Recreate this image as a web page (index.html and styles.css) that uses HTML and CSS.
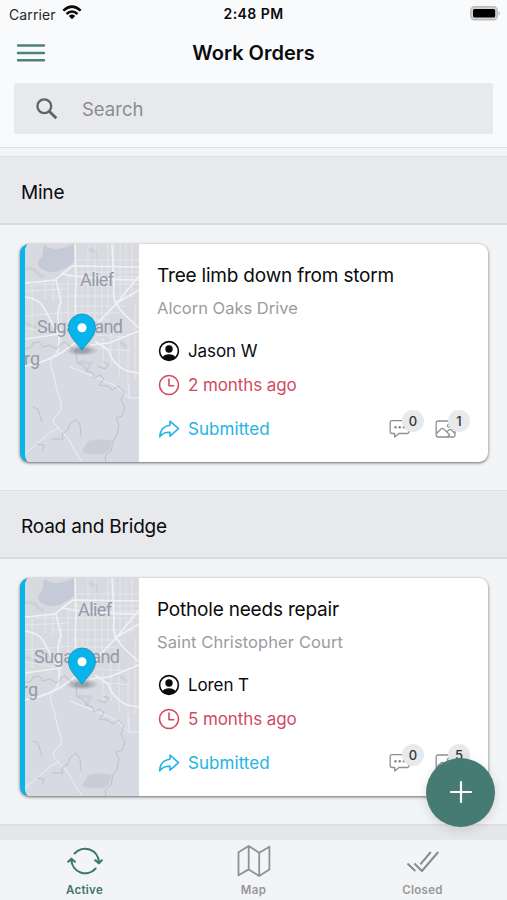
FILE: index.html
```html
<!DOCTYPE html>
<html lang="en">
<head>
<meta charset="utf-8">
<title>Work Orders</title>
<link rel="stylesheet" href="styles.css">
</head>
<body>
<svg class="defs" width="0" height="0" aria-hidden="true">
  <symbol id="map" viewBox="0 0 114 218">
    <rect width="114" height="218" fill="#d7dae2"/>
    <path d="M0 0H114V145L96 133 80 117 54 105 35 110 0 100Z" fill="#d8dae0"/>
    <path d="M19 1Q27 6 34 5T49 0V18Q43 23 34 27 22 30 14 23 11 19 17 13Z" fill="#c5cad7"/>
    <path d="M63 197Q74 194 87 197L83 208Q70 213 57 208Z" fill="#cacdd5"/>
    <path d="M0 25Q10 23 13 30L19 33M63 5L71 8 70 17M53 118L66 119 61 128M93 97L102 103M0 79L12 84" fill="none" stroke="#cbd0da" stroke-width="3"/>
    <g fill="none" stroke="#e9ebef" stroke-width=".8">
      <path d="M50 16H114M48 28H114M43 33H114M10 40H114M26 52H110M48 62H101M47 69H94M48 76H84M0 47L45 45M0 72L47 68M63 0V75M70 0V76M77 18V78M83 0V72M89 0V60M95 0V51M101 0V48M107 0V48M57 20V78M43 31V81M36 43V98M28 35V57M20 35V55M0 84L33 89M7 40V90M72 91L101 93M73 104L106 107M86 81V123M94 82V134M103 90V146M110 60V136M78 94V122"/>
    </g>
    <g fill="none" stroke="#f1f2f6" stroke-linejoin="round">
      <path d="M0 39L30 36Q38 29 48 22L114 23M0 53Q15 55 19 64L28 81Q35 89 34 98T32 109M31 36L36 58Q30 69 36 91M50 0L51 37Q50 57 51 80M87 0L89 44Q86 57 100 71L114 84M114 32L91 60 70 82 45 103Q25 118 0 122M70 97L83 106Q88 121 102 127L114 129M90 60L114 46M37 30Q72 36 114 36M0 95L35 90M65 101L84 99 114 87" stroke-width="1.6"/>
      <path d="M32 108Q24 116 26 123L30 136Q31 143 33 150 39 164 34 169 26 176 29 179L41 192Q46 198 48 204L57 218M45 123L73 134 91 142 104 154M0 210L26 188 34 184M104 140V154H114" stroke-width=".9"/>
    </g>
    <g fill="none" stroke="#b8bdc8" stroke-width=".9" stroke-linejoin="round">
      <path d="M0 104Q6 106 8 99L14 98 18 103 25 101 31 105 39 98 45 102 51 109 52 119 58 121 62 127 68 129 69 134 75 131 79 135 74 141 82 142 88 146 93 142 99 148 96 156 100 164 97 172 91 174 94 181 92 191 88 197 86 207 80 212 81 218"/>
      <path d="M27 195H38L37 190 43 186 45 180 51 175 55 181 56 193M8 163L13 165 17 178M12 200L19 201 17 207M72 122L80 125 84 120 78 118"/>
    </g>
  </symbol>
  <symbol id="pin" viewBox="0 0 34 44">
    <ellipse cx="17" cy="37.5" rx="15" ry="5" fill="#7f8490" opacity=".16"/>
    <ellipse cx="17" cy="37.5" rx="12" ry="4" fill="#7f8490" opacity=".24"/>
    <ellipse cx="17" cy="37.5" rx="8" ry="2.8" fill="#666b75" opacity=".3"/>
    <path d="M17 37.3C13 31 3.500 24 3.500 14.400a13.500 13.500 0 0 1 27 0C30.500 24 21 31 17 37.300Z" fill="#09b4ea" stroke="#1692bd" stroke-width=".8"/>
    <circle cx="17" cy="14.700" r="4.500" fill="#fff"/>
  </symbol>
  <symbol id="person" viewBox="0 0 22 22">
    <circle cx="11" cy="11" r="9.400" fill="none" stroke="#0b0b0c" stroke-width="1.600"/>
    <circle cx="11" cy="9" r="3.700" fill="#0b0b0c"/>
    <path d="M4.300 17.300Q6.500 14.300 11 14.300T17.700 17.300Q15 20.400 11 20.400T4.300 17.300Z" fill="#0b0b0c"/>
  </symbol>
  <symbol id="clock" viewBox="0 0 22 22">
    <g fill="none" stroke="#d04a60" stroke-width="1.600" stroke-linecap="round" stroke-linejoin="round"><circle cx="11" cy="11" r="9.500"/><path d="M11 5V11.700H15.700"/></g>
  </symbol>
  <symbol id="share" viewBox="0 0 22 22">
    <path d="M12 3.200L20.500 10.700 12 18.200V14.200C7.500 14 4 15.500 1.700 18.800 2 12.400 5 8 12 7.200Z" fill="none" stroke="#23b4e4" stroke-width="1.600" stroke-linejoin="round"/>
  </symbol>
  <symbol id="chat" viewBox="0 0 22 20">
    <path d="M3 1.700H18.200Q20 1.700 20 3.500V12.700Q20 14.500 18.200 14.500H10L5.700 18V14.500H3Q1.200 14.500 1.200 12.700V3.500Q1.200 1.700 3 1.700Z" fill="none" stroke="#8d8f92" stroke-width="1.300" stroke-linejoin="round"/>
    <g fill="#808286"><circle cx="6.500" cy="8.200" r="1.200"/><circle cx="10.700" cy="8.200" r="1.200"/><circle cx="14.900" cy="8.200" r="1.200"/></g>
  </symbol>
  <symbol id="photo" viewBox="0 0 22 20">
    <g fill="none" stroke="#8d8f92" stroke-width="1.300" stroke-linejoin="round"><rect x="1.200" y="2" width="18.800" height="16" rx="1.800"/><circle cx="14" cy="6.700" r="1.500"/><path d="M1.500 14.500L6.300 9.800Q7.500 9 8.600 9.900L14.600 15.800 12.500 18M11.500 12.700L14.300 10.700Q15.400 10 16.500 11L20 14.500"/></g>
  </symbol>
</svg>
<div class="screen">
  <header class="top">
    <div class="status">
      <div class="carrier"><span>Carrier</span>
        <svg width="20" height="15" viewBox="0 0 20 15"><g fill="none" stroke="#0b0b0c" stroke-width="2.500"><path d="M1.300 5.600Q10-2.400 18.700 5.600"/><path d="M4.500 9Q10 4 15.500 9"/></g><path d="M6.800 11Q10 8.200 13.200 11L10 14.300Z" fill="#0b0b0c"/></svg>
      </div>
      <div class="time">2:48 PM</div>
      <svg class="battery" width="31" height="15" viewBox="0 0 31 15"><rect x=".8" y=".8" width="26.500" height="13" rx="3.800" fill="#d5d5d6" stroke="#b9babb" stroke-width="1.400"/><rect x="3" y="3" width="22.200" height="8.600" rx="1.500" fill="#000"/><path d="M28.700 5Q31 7.200 28.700 9.600Z" fill="#acadae"/></svg>
    </div>
    <div class="titlebar">
      <svg class="menu" width="30" height="20" viewBox="0 0 30 20"><path d="M2 2.500H28M2 10H28M2 17.200H28" stroke="#4d827b" stroke-width="2.400" stroke-linecap="round"/></svg>
      <h1>Work Orders</h1>
    </div>
    <div class="search">
      <svg width="22" height="22" viewBox="0 0 22 22" fill="none" stroke="#626366"><circle cx="8.300" cy="8.300" r="6.900" stroke-width="2.300"/><path d="M13.200 13.200L20.300 20.300" stroke-width="2.900"/></svg>
      <span>Search</span>
    </div>
  </header>
  <main>
    <h2>Mine</h2>
    <div class="group">
      <article class="card">
        <div class="thumb">
          <svg width="114" height="218" viewBox="0 0 114 218"><use href="#map" width="114" height="218"/><g class="place"><text x="55" y="42" textLength="34">Alief</text><text x="12" y="89" textLength="86">Sugar Land</text><text x="-1" y="121">rg</text></g><use href="#pin" x="40" y="69" width="34" height="44"/></svg>
        </div>
        <div class="info">
          <h3>Tree limb down from storm</h3>
          <p class="address">Alcorn Oaks Drive</p>
          <div class="row"><svg width="22" height="22"><use href="#person"/></svg><span>Jason W</span></div>
          <div class="row age"><svg width="22" height="22"><use href="#clock"/></svg><span>2 months ago</span></div>
          <div class="row state"><svg width="22" height="22"><use href="#share"/></svg><span>Submitted</span>
            <div class="counts"><div class="count"><svg width="22" height="20"><use href="#chat"/></svg><b>0</b></div><div class="count"><svg width="22" height="20"><use href="#photo"/></svg><b>1</b></div></div>
          </div>
        </div>
      </article>
    </div>
    <h2>Road and Bridge</h2>
    <div class="group">
      <article class="card">
        <div class="thumb">
          <svg width="114" height="218" viewBox="0 0 114 218"><use href="#map" width="114" height="218"/><g class="place"><text x="53" y="38" textLength="34">Alief</text><text x="9" y="85" textLength="86">Sugar Land</text><text x="-3" y="118">rg</text></g><use href="#pin" x="40" y="69" width="34" height="44"/></svg>
        </div>
        <div class="info">
          <h3>Pothole needs repair</h3>
          <p class="address court">Saint Christopher Court</p>
          <div class="row"><svg width="22" height="22"><use href="#person"/></svg><span>Loren T</span></div>
          <div class="row age"><svg width="22" height="22"><use href="#clock"/></svg><span>5 months ago</span></div>
          <div class="row state"><svg width="22" height="22"><use href="#share"/></svg><span>Submitted</span>
            <div class="counts"><div class="count"><svg width="22" height="20"><use href="#chat"/></svg><b>0</b></div><div class="count"><svg width="22" height="20"><use href="#photo"/></svg><b>5</b></div></div>
          </div>
        </div>
      </article>
    </div>
    <div class="next"></div>
  </main>
  <button class="add" aria-label="Add"><svg width="24" height="24" viewBox="0 0 24 24"><path d="M12 2V22M2 12H22" stroke="#fff" stroke-width="2.200" stroke-linecap="round"/></svg></button>
  <nav>
    <a class="active"><svg width="36" height="32" viewBox="0 0 36 32" fill="none" stroke="#3d766f" stroke-width="2.100" stroke-linecap="round" stroke-linejoin="round"><path d="M7.600 8.500A13.800 13.800 0 0 1 31.800 17M28.200 15.300L31.800 18.300 34.800 15.300M28.600 23.500A13.800 13.800 0 0 1 4.400 15M1.300 16.700L4.400 13.700 8 16.700"/></svg><span>Active</span></a>
    <a><svg width="36" height="34" viewBox="0 0 36 34" fill="none" stroke="#909193" stroke-width="1.800" stroke-linejoin="round"><path d="M2.500 8.200L12.700 2 23.200 8.700 33.400 2.700V25.500L23.200 32 12.700 25.400 2.500 31.300ZM12.700 2V25.400M23.200 8.700V32"/></svg><span>Map</span></a>
    <a><svg width="34" height="32" viewBox="0 0 34 32" fill="none" stroke="#898a8c" stroke-width="2"><path d="M1.500 18.500L9.300 26M8.300 18.500L16 26 32.200 7M14.300 19.300L24.800 7"/></svg><span>Closed</span></a>
  </nav>
</div>
</body>
</html>
```
FILE: styles.css
```css
* { box-sizing: border-box; }
body { margin: 0; font-family: Inter, "Liberation Sans", sans-serif; color: #0b0b0c; }
.defs { position: absolute; }
svg { display: block; flex: none; }
h1, h2, h3, p { margin: 0; font-weight: 400; white-space: nowrap; }
.screen { width: 507px; height: 900px; display: flex; flex-direction: column; overflow: hidden; position: relative; background: #f3f4f6; }
.top { height: 148px; flex: none; background: #f9fafc; border-bottom: 1px solid #dfe1e4; }
.status { height: 28px; display: grid; grid-template-columns: 1fr auto 1fr; align-items: center; padding: 0 6px 0 9px; }
.carrier { display: flex; align-items: center; gap: 6px; font-size: 14px; letter-spacing: .1px; color: #252628; }
.carrier svg { margin-top: -3px; }
.time { font-size: 14px; font-weight: 600; letter-spacing: .45px; margin: -2px 0 0 -3px; }
.battery { justify-self: end; margin-top: -2px; }
.titlebar { height: 55px; display: grid; grid-template-columns: 30px 1fr 30px; align-items: center; padding: 0 16px 5px; }
h1 { text-align: center; font-size: 20px; font-weight: 600; letter-spacing: 0; }
.search { height: 51px; margin: 0 14px; padding-left: 22px; display: flex; align-items: center; gap: 24px; background: #e8e9ed; border-radius: 2px; color: #8b8c90; font-size: 18.500px; }
main { flex: 1; min-height: 0; overflow: hidden; padding-top: 8px; }
h2 { height: 69px; display: flex; align-items: center; padding: 5px 21px 0; background: #e8e9ed; border-top: 1px solid #dfe0e3; border-bottom: 2px solid #d9dbde; font-size: 19px; letter-spacing: -.2px; }
.group { height: 265px; padding: 19px 19px 0 20px; }
.card { height: 218px; display: flex; background: #fff; border-radius: 9px; overflow: hidden; border-left: 5px solid #08b4ea; box-shadow: 0 1px 3px #0008, 0 1px 6px #0001; }
.thumb { width: 114px; flex: none; }
.place { fill: #9599a8; font: 18px Roboto, sans-serif; }
.info { flex: 1; padding: 18px 17px 0 18px; }
h3 { height: 28px; line-height: 28px; font-size: 19px; letter-spacing: -.2px; }
.address { height: 38px; line-height: 37px; font-size: 16.500px; color: #9b9ca0; }
.court { letter-spacing: .1px; }
.row { height: 34px; margin-left: 1px; display: flex; align-items: center; gap: 8px; font-size: 17px; letter-spacing: -.1px; }
.info > .row:nth-child(3) { margin-top: 6px; }
.age { color: #d04a60; }
.state { margin-top: 10px; color: #23b4e4; letter-spacing: .05px; }
.counts { display: flex; gap: 24px; margin-left: auto; margin-right: 14px; }
.count { position: relative; }
.count b { position: absolute; left: 13px; top: -9px; width: 22px; height: 22px; border-radius: 50%; background: #e8e9ed; color: #343539; text-align: center; line-height: 22px; font-size: 13px; font-weight: 500; }
.next { height: 20px; border-top: 2px solid #dfe0e3; background: #e6e7ea; }
.add { position: absolute; left: 426px; top: 757.500px; width: 69px; height: 69px; border: 0; border-radius: 50%; padding: 0; display: grid; place-items: center; background: #467b74; box-shadow: 0 3px 12px #0002; }
nav { height: 60px; flex: none; display: grid; grid-template-columns: repeat(3, 1fr); background: #f3f4f6; }
nav a { display: flex; flex-direction: column; align-items: center; color: #97989b; font-size: 11.500px; font-weight: 600; letter-spacing: .3px; }
nav svg { height: 34px; margin-top: 4px; }
nav span { line-height: 16px; margin-top: 4px; }
nav .active { color: #3d766f; }
```
